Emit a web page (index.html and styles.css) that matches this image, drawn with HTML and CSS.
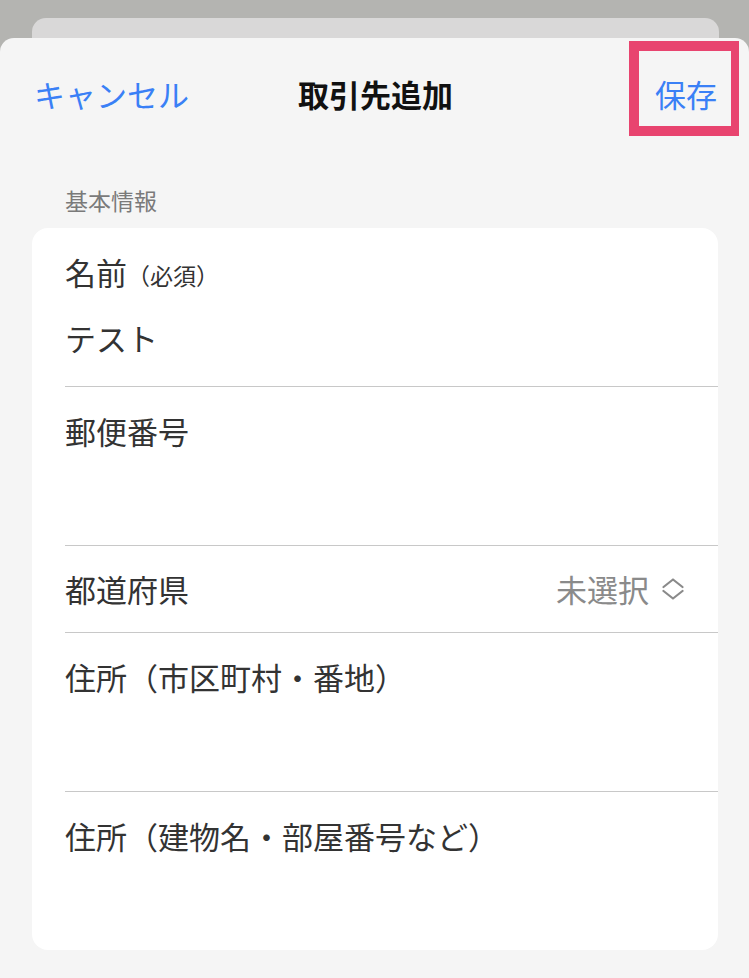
FILE: index.html
```html
<!DOCTYPE html>
<html lang="ja">
  <head>
    <meta charset="UTF-8" />
    <meta name="viewport" content="width=device-width, initial-scale=1.0" />
    <title>取引先追加</title>
    <link rel="stylesheet" href="styles.css">
  </head>
  <body>
    <div class="back-sheet"></div>
    <div class="sheet">
      <div class="nav">
        <div class="nav-left">
          <a class="nav-btn" href="#">キャンセル</a>
        </div>
        <div class="nav-title">取引先追加</div>
        <div class="nav-right">
          <a class="nav-btn save" href="#">保存</a>
        </div>
      </div>

      <div class="section-title">基本情報</div>
      <div class="card">
        <div class="row">
          <div class="label">名前<span class="small">（必須）</span></div>
          <div class="value">テスト</div>
        </div>
        <div class="row">
          <div class="label">郵便番号</div>
          <div class="value"></div>
        </div>
        <div class="row single flex space align">
          <div class="label">都道府県</div>
          <div class="picker flex align">
            <span>未選択</span>
            <svg width="22" height="24" viewBox="0 0 22 24">
              <polyline points="1.5,10 11,2.5 20.5,10" fill="none" stroke="#8a8a8a" stroke-width="2.2" stroke-linecap="round" stroke-linejoin="round" />
              <polyline points="1.5,14 11,21.5 20.5,14" fill="none" stroke="#8a8a8a" stroke-width="2.2" stroke-linecap="round" stroke-linejoin="round" />
            </svg>
          </div>
        </div>
        <div class="row">
          <div class="label">住所（市区町村・番地）</div>
          <div class="value"></div>
        </div>
        <div class="row last">
          <div class="label">住所（建物名・部屋番号など）</div>
          <div class="value"></div>
        </div>
      </div>
    </div>
  </body>
</html>
```

FILE: styles.css
```css
* {
  margin: 0;
  padding: 0;
  box-sizing: border-box;
}
body {
  background-color: #b4b4b1;
  font-family: "Noto Sans CJK JP", "Noto Sans", sans-serif;
  color: #333;
  overflow: hidden;
}
.flex {
  display: flex;
}
.space {
  justify-content: space-between;
}
.align {
  align-items: center;
}

.back-sheet {
  margin: 18px 30px 0 32px;
  height: 20px;
  background-color: #d9d8d8;
  border-radius: 14px 14px 0 0;
}

.sheet {
  background-color: #f5f5f5;
  border-radius: 14px 14px 0 0;
  min-height: calc(100vh - 38px);
  padding-bottom: 30px;
}

.nav {
  display: grid;
  grid-template-columns: 1fr auto 1fr;
  align-items: center;
  padding: 36px 32px 0 34px;
  height: 76px;
}
.nav-right {
  display: flex;
  justify-content: flex-end;
}
.nav-left {
  display: flex;
}
.nav-btn {
  display: block;
  font-size: 31px;
  line-height: 40px;
  color: #3a80f6;
  text-decoration: none;
}
.nav-title {
  font-size: 31px;
  line-height: 40px;
  font-weight: bold;
  color: #111;
}
/* 保存ボタンの赤い枠 */
.save {
  position: relative;
}
.save::after {
  content: "";
  position: absolute;
  left: -26px;
  right: -22px;
  top: -33px;
  bottom: -22px;
  border: 10px solid #e8446f;
  border-right-width: 8px;
}

.section-title {
  margin-top: 71px;
  padding-left: 65px;
  font-size: 23px;
  line-height: 30px;
  color: #7a7a7a;
}

.card {
  margin: 13px 31px 0 32px;
  background-color: #fff;
  border-radius: 16px;
  padding-left: 33px;
}
.card .row {
  padding: 24px 0 28px;
  border-bottom: 1px solid #c8c8c8;
}
.card .row.single {
  padding: 23px 34px 23px 0;
}
.card .row.last {
  border-bottom: none;
}
.card .label {
  font-size: 31px;
  line-height: 40px;
}
.card .label .small {
  font-size: 23px;
  line-height: 1;
}
.card .value {
  margin-top: 26px;
  height: 40px;
  font-size: 31px;
  line-height: 40px;
}
.card .picker {
  font-size: 31px;
  line-height: 40px;
  color: #8a8a8a;
}
.card .picker svg {
  margin-left: 13px;
}
```
